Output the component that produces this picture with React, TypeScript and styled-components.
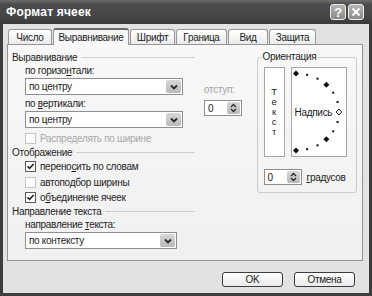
import React from "react";
import styled, { createGlobalStyle } from "styled-components";

const GlobalStyle = createGlobalStyle`
  html, body {
    margin: 0;
    padding: 0;
    background: #ffffff;
  }
  body {
    font-family: "Liberation Sans", Arial, sans-serif;
    font-size: 10px;
    letter-spacing: -0.3px;
    color: #1c1c1c;
  }
`;

const Window = styled.div`
  width: 372px;
  height: 296px;
  box-sizing: border-box;
  display: flex;
  flex-direction: column;
  background: #3d3d3d;
`;
const TitleBar = styled.div`
  height: 24px;
  display: flex;
  align-items: center;
  padding: 0 8px 0 6px;
  background: linear-gradient(#6c6c6c, #4c4c4c 18%, #454545 70%, #3a3a3a);
`;
const Title = styled.span`
  flex: 1;
  color: #ffffff;
  font-weight: bold;
  font-size: 12px;
  letter-spacing: 0.2px;
`;
const CaptionButton = styled.div`
  width: 16px;
  height: 16px;
  box-sizing: border-box;
  margin-left: 2px;
  border: 1px solid #eeeeee;
  border-radius: 3px;
  background: linear-gradient(#b4b4b4, #8a8a8a);
  display: flex;
  align-items: center;
  justify-content: center;
  color: #ffffff;
  font-weight: bold;
  font-size: 13px;
  line-height: 1;
`;
const Body = styled.div`
  flex: 1;
  margin: 0 3px 3px;
  background: #e2e2e2;
  padding: 4px 6px 0 4px;
  display: flex;
  flex-direction: column;
`;
const TabRow = styled.div`
  display: flex;
  align-items: flex-end;
  gap: 1px;
  padding-left: 1px;
  position: relative;
  z-index: 1;
`;
const Tab = styled.div<{ $active?: boolean; $w: number }>`
  width: ${(p) => p.$w}px;
  height: ${(p) => (p.$active ? 17 : 15)}px;
  margin-bottom: ${(p) => (p.$active ? -1 : 0)}px;
  box-sizing: border-box;
  border: 1px solid #979797;
  border-bottom: none;
  border-top: ${(p) => (p.$active ? "2px solid #6a6a6a" : "1px solid #979797")};
  border-radius: 3px 3px 0 0;
  background: ${(p) =>
    p.$active ? "#f7f7f7" : "linear-gradient(#ffffff, #ebebeb)"};
  display: flex;
  align-items: center;
  justify-content: center;
  padding-bottom: ${(p) => (p.$active ? 1 : 0)}px;
`;
const Panel = styled.div`
  height: 217px;
  box-sizing: border-box;
  border: 1px solid #939393;
  background: linear-gradient(#f8f8f8, #f0f0f0);
  padding: 6px 5px 0 4px;
  display: flex;
`;
const LeftCol = styled.div`
  width: 246px;
  display: flex;
  flex-direction: column;
`;
const SectionHeader = styled.div`
  width: 183px;
  height: 12px;
  display: flex;
  align-items: center;
  gap: 4px;
  color: #1e1e1e;
  &::after {
    content: "";
    flex: 1;
    border-top: 1px solid #cfcfcf;
  }
`;
const Indented = styled.div<{ $mt?: number }>`
  margin-left: 13px;
  margin-top: ${(p) => p.$mt ?? 0}px;
  display: flex;
  flex-direction: column;
`;
const FieldLabel = styled.div<{ $disabled?: boolean }>`
  height: 12px;
  line-height: 12px;
  color: ${(p) => (p.$disabled ? "#a4a4a4" : "#1e1e1e")};
`;
const AlignRow = styled.div`
  display: flex;
  margin-top: 2px;
`;
const SelectBox = styled.div<{ $w: number }>`
  width: ${(p) => p.$w}px;
  height: 17px;
  box-sizing: border-box;
  border: 1px solid #8e8e8e;
  background: #ffffff;
  display: flex;
  align-items: center;
  padding: 1px 1px 1px 3px;
  margin-top: 1px;
  margin-bottom: 3px;
`;
const SelectText = styled.span`
  flex: 1;
`;
const DropButton = styled.div`
  width: 15px;
  height: 13px;
  border-radius: 2px;
  background: linear-gradient(#d8d8d8, #b9b9b9);
  display: flex;
  align-items: center;
  justify-content: center;
`;
const IndentCol = styled.div`
  margin-left: 21px;
  margin-top: 19px;
  display: flex;
  flex-direction: column;
  gap: 4px;
`;
const SpinBox = styled.div<{ $w: number }>`
  width: ${(p) => p.$w}px;
  height: 16px;
  box-sizing: border-box;
  border: 1px solid #8e8e8e;
  background: #ffffff;
  display: flex;
  align-items: center;
  padding: 1px 1px 1px 3px;
`;
const SpinButtons = styled.div`
  width: 13px;
  height: 12px;
  border-radius: 2px;
  background: linear-gradient(#d8d8d8, #b9b9b9);
  display: flex;
  align-items: center;
  justify-content: center;
`;
const CheckRow = styled.div<{ $disabled?: boolean; $h?: number }>`
  height: ${(p) => p.$h ?? 15}px;
  display: flex;
  align-items: center;
  gap: 4px;
  margin-left: 13px;
  color: ${(p) => (p.$disabled ? "#a8a8a8" : "#1e1e1e")};
`;
const Box = styled.div<{ $disabled?: boolean }>`
  width: 11px;
  height: 11px;
  box-sizing: border-box;
  border: 1px solid ${(p) => (p.$disabled ? "#c4c4c4" : "#5a5a5a")};
  background: #ffffff;
  display: flex;
  align-items: center;
  justify-content: center;
`;
const Group = styled.fieldset`
  width: 101px;
  height: 142px;
  box-sizing: border-box;
  margin: 0;
  padding: 4px 6px 0 6px;
  border: 1px solid #cbcbcb;
  border-radius: 3px;
  display: flex;
  flex-direction: column;
`;
const Legend = styled.legend`
  padding: 0 1px;
  margin-left: -2px;
  line-height: 12px;
`;
const Pickers = styled.div`
  display: flex;
  gap: 6px;
`;
const VerticalBox = styled.div`
  width: 21px;
  height: 90px;
  box-sizing: border-box;
  border: 1px solid #a6a6a6;
  background: #ffffff;
  display: flex;
  flex-direction: column;
  align-items: center;
  justify-content: center;
  font-size: 9.5px;
  line-height: 10px;
`;
const ArcBox = styled.div`
  position: relative;
  width: 56px;
  height: 90px;
  box-sizing: border-box;
  border: 1px solid #a6a6a6;
  background: #ffffff;
  display: flex;
  align-items: center;
  padding-left: 3px;
`;
const ArcDrawing = styled.svg`
  position: absolute;
  left: 0;
  top: 0;
`;
const DegreeRow = styled.div`
  display: flex;
  align-items: center;
  gap: 5px;
  margin-top: 12px;
`;
const ButtonRow = styled.div`
  display: flex;
  justify-content: flex-end;
  gap: 11px;
  padding-right: 8px;
  margin-top: 11px;
`;
const PushButton = styled.div`
  width: 61px;
  height: 15px;
  box-sizing: border-box;
  border: 1px solid #3c3c3c;
  border-radius: 3px;
  background: linear-gradient(#ffffff, #eaeaea);
  display: flex;
  align-items: center;
  justify-content: center;
`;
const U = styled.span`
  text-decoration: underline;
`;

const Chevron = () => (
  <svg width="8" height="6" viewBox="0 0 8 6">
    <path d="M1 1.5 L4 4.5 L7 1.5" fill="none" stroke="#2a2a2a" strokeWidth="1.8" />
  </svg>
);

const SpinArrows = () => (
  <svg width="7" height="10" viewBox="0 0 7 10">
    <path d="M1 4 L3.5 1.5 L6 4" fill="none" stroke="#2a2a2a" strokeWidth="1.3" />
    <path d="M1 6 L3.5 8.5 L6 6" fill="none" stroke="#2a2a2a" strokeWidth="1.3" />
  </svg>
);

const Tick = () => (
  <svg width="9" height="9" viewBox="0 0 9 9">
    <path d="M1.5 4.2 L3.6 6.4 L7.6 2" fill="none" stroke="#222" strokeWidth="1.6" />
  </svg>
);

// arc of the orientation picker: centre at left middle of the box
const arcPoints = Array.from({ length: 13 }, (_, i) => 90 - i * 15);

const OrientationArc = () => {
  const cx = 4;
  const cy = 44;
  return (
    <ArcDrawing width="56" height="90" viewBox="0 0 56 90">
      {arcPoints.map((deg) => {
        const r = (deg * Math.PI) / 180;
        const x = cx + 43 * Math.cos(r);
        const y = cy - 38.5 * Math.sin(r);
        if (deg === 0)
          return (
            <path
              key={deg}
              d={`M${x} ${y - 3} L${x + 3} ${y} L${x} ${y + 3} L${x - 3} ${y} Z`}
              fill="#ffffff"
              stroke="#222"
              strokeWidth="1"
            />
          );
        if (deg % 45 === 0)
          return (
            <path
              key={deg}
              d={`M${x} ${y - 3} L${x + 3} ${y} L${x} ${y + 3} L${x - 3} ${y} Z`}
              fill="#111"
            />
          );
        return <rect key={deg} x={x - 1} y={y - 1} width="2" height="2" fill="#111" />;
      })}
    </ArcDrawing>
  );
};

const tabs = [
  { label: "Число", w: 44 },
  { label: "Выравнивание", w: 76, active: true },
  { label: "Шрифт", w: 45 },
  { label: "Граница", w: 51 },
  { label: "Вид", w: 40 },
  { label: "Защита", w: 47 },
];

const App: React.FC = () => {
  return (
    <>
      <GlobalStyle />
      <Window>
        <TitleBar>
          <Title>Формат ячеек</Title>
          <CaptionButton>?</CaptionButton>
          <CaptionButton>
            <svg width="10" height="10" viewBox="0 0 10 10">
              <path d="M1.5 1.5 L8.5 8.5 M8.5 1.5 L1.5 8.5" stroke="#fff" strokeWidth="2" />
            </svg>
          </CaptionButton>
        </TitleBar>
        <Body>
          <TabRow>
            {tabs.map((t) => (
              <Tab key={t.label} $w={t.w} $active={t.active}>
                {t.label}
              </Tab>
            ))}
          </TabRow>
          <Panel>
            <LeftCol>
              <SectionHeader>Выравнивание</SectionHeader>
              <AlignRow>
                <Indented>
                  <FieldLabel>
                    по горизо<U>н</U>тали:
                  </FieldLabel>
                  <SelectBox $w={158}>
                    <SelectText>по центру</SelectText>
                    <DropButton>
                      <Chevron />
                    </DropButton>
                  </SelectBox>
                  <FieldLabel>
                    по <U>в</U>ертикали:
                  </FieldLabel>
                  <SelectBox $w={158}>
                    <SelectText>по центру</SelectText>
                    <DropButton>
                      <Chevron />
                    </DropButton>
                  </SelectBox>
                </Indented>
                <IndentCol>
                  <FieldLabel $disabled>отступ:</FieldLabel>
                  <SpinBox $w={38}>
                    <SelectText>0</SelectText>
                    <SpinButtons>
                      <SpinArrows />
                    </SpinButtons>
                  </SpinBox>
                </IndentCol>
              </AlignRow>
              <CheckRow $disabled>
                <Box $disabled />
                <span>Распределять по ширине</span>
              </CheckRow>
              <SectionHeader>Отображение</SectionHeader>
              <CheckRow $h={17}>
                <Box>
                  <Tick />
                </Box>
                <span>
                  перено<U>с</U>ить по словам
                </span>
              </CheckRow>
              <CheckRow>
                <Box $disabled />
                <span>автоподбор ширины</span>
              </CheckRow>
              <CheckRow>
                <Box>
                  <Tick />
                </Box>
                <span>
                  о<U>б</U>ъединение ячеек
                </span>
              </CheckRow>
              <SectionHeader>Направление текста</SectionHeader>
              <Indented $mt={2}>
                <FieldLabel>
                  направление <U>т</U>екста:
                </FieldLabel>
                <SelectBox $w={152}>
                  <SelectText>по контексту</SelectText>
                  <DropButton>
                    <Chevron />
                  </DropButton>
                </SelectBox>
              </Indented>
            </LeftCol>
            <Group>
              <Legend>Ориентация</Legend>
              <Pickers>
                <VerticalBox>
                  <span>Т</span>
                  <span>е</span>
                  <span>к</span>
                  <span>с</span>
                  <span>т</span>
                </VerticalBox>
                <ArcBox>
                  <OrientationArc />
                  Надпись
                </ArcBox>
              </Pickers>
              <DegreeRow>
                <SpinBox $w={38}>
                  <SelectText>0</SelectText>
                  <SpinButtons>
                    <SpinArrows />
                  </SpinButtons>
                </SpinBox>
                <span>
                  <U>г</U>радусов
                </span>
              </DegreeRow>
            </Group>
          </Panel>
          <ButtonRow>
            <PushButton>OK</PushButton>
            <PushButton>Отмена</PushButton>
          </ButtonRow>
        </Body>
      </Window>
    </>
  );
};

export default App;
